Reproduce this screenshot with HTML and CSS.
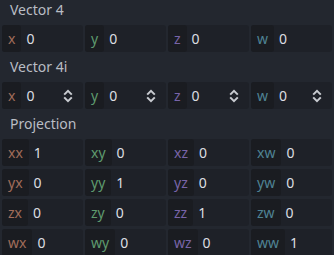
FILE: index.html
```html
<!DOCTYPE html>
<html lang="en">
<head>
  <meta charset="UTF-8" />
  <title>Inspector</title>
  <link rel="stylesheet" href="styles.css">
</head>
<body>
  <div class="inspector">

    <div class="section-title">Vector 4</div>
    <div class="grid">
      <div class="field"><span class="axis c1">x</span><span class="value">0</span></div>
      <div class="field"><span class="axis c2">y</span><span class="value">0</span></div>
      <div class="field"><span class="axis c3">z</span><span class="value">0</span></div>
      <div class="field"><span class="axis c4">w</span><span class="value">0</span></div>
    </div>

    <div class="section-title">Vector 4i</div>
    <div class="grid">
      <div class="field"><span class="axis c1">x</span><span class="value">0</span>
        <svg class="spin" width="10" height="14" viewBox="0 0 10 14"><path d="M1.2 5.6 5 1.8 8.8 5.6M1.2 8.4 5 12.2 8.8 8.4"/></svg></div>
      <div class="field"><span class="axis c2">y</span><span class="value">0</span>
        <svg class="spin" width="10" height="14" viewBox="0 0 10 14"><path d="M1.2 5.6 5 1.8 8.8 5.6M1.2 8.4 5 12.2 8.8 8.4"/></svg></div>
      <div class="field"><span class="axis c3">z</span><span class="value">0</span>
        <svg class="spin" width="10" height="14" viewBox="0 0 10 14"><path d="M1.2 5.6 5 1.8 8.8 5.6M1.2 8.4 5 12.2 8.8 8.4"/></svg></div>
      <div class="field"><span class="axis c4">w</span><span class="value">0</span>
        <svg class="spin" width="10" height="14" viewBox="0 0 10 14"><path d="M1.2 5.6 5 1.8 8.8 5.6M1.2 8.4 5 12.2 8.8 8.4"/></svg></div>
    </div>

    <div class="section-title">Projection</div>
    <div class="grid matrix">
      <div class="field"><span class="axis c1">xx</span><span class="value">1</span></div>
      <div class="field"><span class="axis c2">xy</span><span class="value">0</span></div>
      <div class="field"><span class="axis c3">xz</span><span class="value">0</span></div>
      <div class="field"><span class="axis c4">xw</span><span class="value">0</span></div>

      <div class="field"><span class="axis c1">yx</span><span class="value">0</span></div>
      <div class="field"><span class="axis c2">yy</span><span class="value">1</span></div>
      <div class="field"><span class="axis c3">yz</span><span class="value">0</span></div>
      <div class="field"><span class="axis c4">yw</span><span class="value">0</span></div>

      <div class="field"><span class="axis c1">zx</span><span class="value">0</span></div>
      <div class="field"><span class="axis c2">zy</span><span class="value">0</span></div>
      <div class="field"><span class="axis c3">zz</span><span class="value">1</span></div>
      <div class="field"><span class="axis c4">zw</span><span class="value">0</span></div>

      <div class="field"><span class="axis c1">wx</span><span class="value">0</span></div>
      <div class="field"><span class="axis c2">wy</span><span class="value">0</span></div>
      <div class="field"><span class="axis c3">wz</span><span class="value">0</span></div>
      <div class="field"><span class="axis c4">ww</span><span class="value">1</span></div>
    </div>

  </div>
</body>
</html>
```

FILE: styles.css
```css
body {
  margin: 0;
  background: #23272f;
  font-family: "Noto Sans", sans-serif;
  font-size: 14px;
  overflow: hidden;
}

.inspector {
  margin-top: -5px;
  padding: 0 2px;
}

.section-title {
  height: 30px;
  line-height: 30px;
  padding-left: 8px;
  color: #b9bdc4;
}

.grid {
  display: grid;
  grid-template-columns: repeat(4, 1fr);
  column-gap: 2px;
}

.matrix {
  row-gap: 3px;
}

.field {
  display: flex;
  align-items: center;
  height: 27px;
  background: #1e2128;
  border-radius: 3px;
}

.axis {
  height: 27px;
  line-height: 27px;
  padding: 0 6px;
  background: #1a1c21;
  border-radius: 3px;
}

.value {
  margin-left: 5px;
  color: #dcdee2;
  line-height: 27px;
}

.spin {
  margin-left: auto;
  margin-right: 10px;
  fill: none;
  stroke: #c8cbd0;
  stroke-width: 2;
}

.c1 { color: #a06c5a; }
.c2 { color: #5e9a6e; }
.c3 { color: #7864a8; }
.c4 { color: #4f8394; }
```
